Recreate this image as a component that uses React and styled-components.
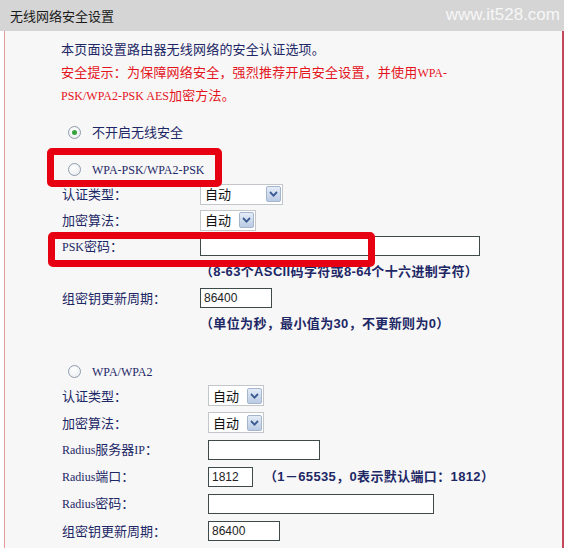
import styled, { createGlobalStyle } from 'styled-components';

const GlobalStyle = createGlobalStyle`
  body {
    margin: 0;
    background: #ffffff;
    font-family: 'Noto Sans CJK SC', sans-serif;
  }
`;

const NAVY = '#1d2766';
const RED = '#e4141c';

const Radio = ({ checked }) => (
  <RadioCircle>{checked && <RadioDot />}</RadioCircle>
);

const Select = ({ width, value }) => (
  <SelectBox $width={width}>
    <SelectText>{value}</SelectText>
    <SelectArrow>
      <svg width="9" height="6" viewBox="0 0 9 6">
        <path d="M1 1 L4.5 4.6 L8 1" fill="none" stroke="#3a5c93" strokeWidth="1.8" />
      </svg>
    </SelectArrow>
  </SelectBox>
);

const App = () => {
  return (
    <Page>
      <GlobalStyle />
      <Header>
        <HeaderTitle>无线网络安全设置</HeaderTitle>
        <Watermark>www.it528.com</Watermark>
      </Header>
      <Panel>
        <Intro>本页面设置路由器无线网络的安全认证选项。</Intro>
        <Warning>
          安全提示：为保障网络安全，强烈推荐开启安全设置，并使用<Latin>WPA-</Latin>
          <br />
          <Latin>PSK/WPA2-PSK AES</Latin>加密方法。
        </Warning>

        <RadioRow $top={14}>
          <Radio checked />
          <RadioLabel>不开启无线安全</RadioLabel>
        </RadioRow>

        <RadioRow $top={15}>
          <Radio />
          <RadioLabel>
            <Latin>WPA-PSK/WPA2-PSK</Latin>
          </RadioLabel>
          <Highlight $left={-14} $top={-10} $width={175} $height={39} />
        </RadioRow>

        <Section $top={1} $rowHeight={26} $labelWidth={138}>
          <Label>认证类型：</Label>
          <Select width={83} value="自动" />
          <Label>加密算法：</Label>
          <Select width={56} value="自动" />
          <Label>
            <Latin>PSK</Latin>密码：
            <Highlight $left={-14} $top={-4} $width={327} $height={35} />
          </Label>
          <TextInput $width={280} />
          <Spacer />
          <Hint>（8-63个ASCII码字符或8-64个十六进制字符）</Hint>
          <Label>组密钥更新周期：</Label>
          <TextInput $width={72} defaultValue="86400" />
          <Spacer />
          <Hint>（单位为秒，最小值为30，不更新则为0）</Hint>
        </Section>

        <RadioRow $top={23}>
          <Radio />
          <RadioLabel>
            <Latin>WPA/WPA2</Latin>
          </RadioLabel>
        </RadioRow>

        <Section $top={0} $rowHeight={27} $labelWidth={146}>
          <Label>认证类型：</Label>
          <Select width={56} value="自动" />
          <Label>加密算法：</Label>
          <Select width={56} value="自动" />
          <Label>
            <Latin>Radius</Latin>服务器<Latin>IP</Latin>：
          </Label>
          <TextInput $width={112} />
          <Label>
            <Latin>Radius</Latin>端口：
          </Label>
          <InlineGroup>
            <TextInput $width={45} defaultValue="1812" />
            <Hint>（1－65535，0表示默认端口：1812）</Hint>
          </InlineGroup>
          <Label>
            <Latin>Radius</Latin>密码：
          </Label>
          <TextInput $width={226} />
          <Label>组密钥更新周期：</Label>
          <TextInput $width={72} defaultValue="86400" />
        </Section>
      </Panel>
    </Page>
  );
};

export default App;

const Page = styled.div`
  width: 564px;
  height: 548px;
  overflow: hidden;
  display: flex;
  flex-direction: column;
`;

const Header = styled.div`
  height: 31px;
  flex-shrink: 0;
  display: flex;
  align-items: center;
  justify-content: space-between;
  padding: 0 4px 0 10px;
  background: #d5d5d5;
`;

const HeaderTitle = styled.div`
  font-size: 13px;
  color: #1a1a1a;
  line-height: 20px;
`;

const Watermark = styled.div`
  font-family: 'Liberation Sans', Arial, sans-serif;
  font-size: 17px;
  color: #f7f7f7;
  line-height: 20px;
  margin-top: -2px;
`;

const Panel = styled.div`
  flex: 1;
  margin-left: 4px;
  padding: 7px 0 0 56px;
  background: #f7f7f7;
  border-left: 1px solid #e49a9a;
  border-right: 2px solid #c4475a;
`;

const Intro = styled.div`
  font-size: 13px;
  line-height: 22px;
  color: ${NAVY};
  letter-spacing: 0.2px;
`;

const Warning = styled.div`
  margin-top: 1px;
  font-size: 13px;
  line-height: 22px;
  color: ${RED};
  letter-spacing: 0.2px;
`;

const Latin = styled.span`
  font-family: 'Liberation Serif', 'Times New Roman', serif;
  font-size: 12px;
  letter-spacing: 0;
`;

const RadioRow = styled.div`
  position: relative;
  display: flex;
  align-items: center;
  gap: 11px;
  height: 22px;
  margin-top: ${(p) => p.$top}px;
  padding-left: 7px;
  width: max-content;
`;

const RadioCircle = styled.span`
  width: 13px;
  height: 13px;
  box-sizing: border-box;
  border-radius: 50%;
  border: 1px solid #8e9cab;
  background: radial-gradient(circle at 40% 35%, #ffffff, #e6e9ee);
  display: flex;
  align-items: center;
  justify-content: center;
`;

const RadioDot = styled.span`
  width: 5px;
  height: 5px;
  border-radius: 50%;
  background: #35a43c;
`;

const RadioLabel = styled.span`
  font-size: 13px;
  line-height: 22px;
  color: ${NAVY};
`;

const Highlight = styled.span`
  position: absolute;
  left: ${(p) => p.$left}px;
  top: ${(p) => p.$top}px;
  width: ${(p) => p.$width}px;
  height: ${(p) => p.$height}px;
  box-sizing: border-box;
  border: 7px solid #e60012;
  border-radius: 5px;
  pointer-events: none;
  z-index: 2;
`;

const Section = styled.div`
  display: grid;
  grid-template-columns: ${(p) => p.$labelWidth}px 1fr;
  grid-auto-rows: ${(p) => p.$rowHeight}px;
  align-items: center;
  margin-top: ${(p) => p.$top}px;
  padding-left: 1px;
`;

const Label = styled.div`
  position: relative;
  font-size: 13px;
  line-height: 20px;
  color: ${NAVY};
  white-space: nowrap;
`;

const Spacer = styled.div``;

const Hint = styled.div`
  font-family: 'Liberation Sans', Arial, 'Noto Sans CJK SC', sans-serif;
  font-size: 13px;
  font-weight: 700;
  line-height: 20px;
  letter-spacing: 0.35px;
  color: ${NAVY};
  white-space: nowrap;
`;

const InlineGroup = styled.div`
  display: flex;
  align-items: center;
  gap: 11px;
`;

const SelectBox = styled.div`
  width: ${(p) => p.$width}px;
  height: 21px;
  box-sizing: border-box;
  display: flex;
  align-items: center;
  justify-content: space-between;
  background: #ffffff;
  border: 1px solid #c3c7cc;
  padding: 0 1px 0 4px;
`;

const SelectText = styled.span`
  font-size: 13px;
  line-height: 18px;
  color: #111111;
`;

const SelectArrow = styled.span`
  width: 15px;
  height: 16px;
  box-sizing: border-box;
  display: flex;
  align-items: center;
  justify-content: center;
  border: 1px solid #a4b5cd;
  border-radius: 2px;
  background: linear-gradient(#e4ecf7, #b9cbe4);
`;

const TextInput = styled.input`
  width: ${(p) => p.$width}px;
  height: 20px;
  box-sizing: border-box;
  padding: 0 3px;
  border: 1px solid #3e4a49;
  background: #ffffff;
  font-family: 'Liberation Sans', Arial, sans-serif;
  font-size: 12px;
  color: #222222;
  outline: none;
`;
